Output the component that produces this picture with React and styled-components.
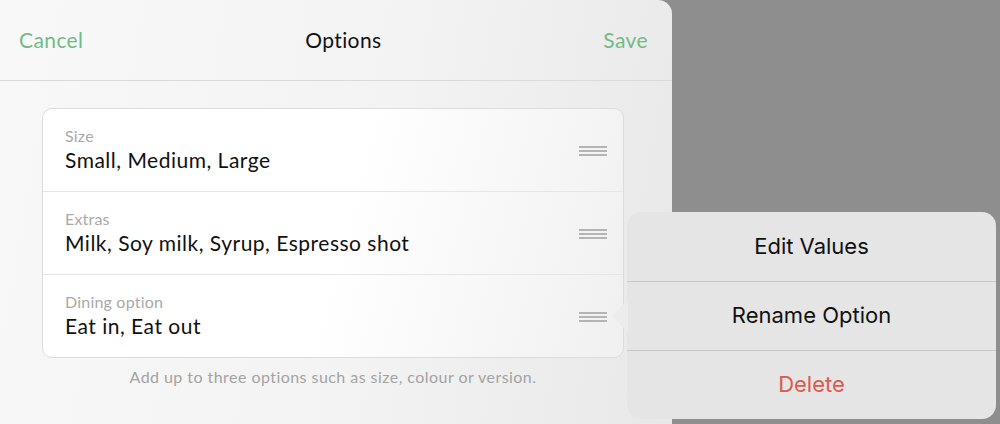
import React from "react";
import styled, { createGlobalStyle } from "styled-components";

const GlobalStyle = createGlobalStyle`
  html, body {
    margin: 0;
    padding: 0;
    height: 100%;
    overflow: hidden;
  }
  body {
    background: #8e8e8e;
    font-family: Lato, "Noto Sans", sans-serif;
  }
  #root {
    height: 100%;
  }
`;

const options = [
  { label: "Size", values: "Small, Medium, Large" },
  { label: "Extras", values: "Milk, Soy milk, Syrup, Espresso shot" },
  { label: "Dining option", values: "Eat in, Eat out" },
];

const menuItems = [
  { text: "Edit Values" },
  { text: "Rename Option" },
  { text: "Delete", danger: true },
];

const App = () => {
  return (
    <>
      <GlobalStyle />
      <Page>
        <Sheet>
          <Header>
            <NavButton>Cancel</NavButton>
            <Title>Options</Title>
            <NavButton>Save</NavButton>
          </Header>
          <Content>
            <Card>
              {options.map((opt) => (
                <Row key={opt.label}>
                  <RowText>
                    <Label>{opt.label}</Label>
                    <Value>{opt.values}</Value>
                  </RowText>
                  <Handle>
                    <span />
                    <span />
                    <span />
                  </Handle>
                </Row>
              ))}
            </Card>
            <Hint>Add up to three options such as size, colour or version.</Hint>
          </Content>
        </Sheet>

        <Popover>
          <Arrow />
          {menuItems.map((item) => (
            <MenuItem key={item.text} $danger={item.danger}>
              {item.text}
            </MenuItem>
          ))}
        </Popover>
      </Page>
    </>
  );
};

export default App;

const Page = styled.div`
  position: relative;
  display: flex;
  height: 100%;
  background: #8e8e8e;
`;

const Sheet = styled.div`
  width: 672px;
  height: 100%;
  background: linear-gradient(100deg, #f8f8f8 0%, #f3f3f3 55%, #e8e8e8 100%);
  border-top-right-radius: 14px;
  display: flex;
  flex-direction: column;
`;

const Header = styled.div`
  height: 80px;
  border-bottom: 1px solid #dadada;
  display: flex;
  align-items: center;
  justify-content: space-between;
  padding: 0 24px 0 19px;
`;

const NavButton = styled.span`
  color: #72bb86;
  font-size: 21px;
  letter-spacing: 0.4px;
  padding-bottom: 1px;
`;

const Title = styled.span`
  color: #111;
  font-size: 21px;
  letter-spacing: 0.4px;
  padding-bottom: 1px;
`;

const Content = styled.div`
  padding: 27px 48px 0 42px;
  display: flex;
  flex-direction: column;
`;

const Card = styled.div`
  border: 1px solid #dcdcdc;
  border-radius: 10px;
  background: linear-gradient(105deg, #ffffff 0%, #ffffff 50%, #f0f0f0 100%);
  overflow: hidden;
`;

const Row = styled.div`
  height: 82px;
  display: flex;
  align-items: center;
  justify-content: space-between;
  padding: 0 16px 0 22px;
  & + & {
    border-top: 1px solid #e6e6e6;
  }
`;

const RowText = styled.div`
  display: flex;
  flex-direction: column;
  padding-bottom: 2px;
`;

const Label = styled.span`
  color: #a9a9a9;
  font-size: 16px;
  letter-spacing: 0.2px;
  line-height: 20px;
`;

const Value = styled.span`
  color: #111;
  font-size: 21px;
  letter-spacing: 0.5px;
  line-height: 27px;
`;

const Handle = styled.div`
  width: 28px;
  display: flex;
  flex-direction: column;
  gap: 2px;
  padding-top: 2px;

  span {
    display: block;
    height: 2px;
    background: #b4b4b4;
  }
`;

const Hint = styled.div`
  text-align: center;
  color: #a3a3a3;
  font-size: 16px;
  letter-spacing: 0.45px;
  margin-top: 9px;
`;

const Popover = styled.div`
  position: absolute;
  left: 627px;
  top: 212px;
  width: 369px;
  background: #e5e5e5;
  border-radius: 14px;
  display: flex;
  flex-direction: column;
`;

const Arrow = styled.div`
  position: absolute;
  left: -15px;
  top: 88px;
  width: 0;
  height: 0;
  border-top: 16px solid transparent;
  border-bottom: 16px solid transparent;
  border-right: 16px solid #ececec;
`;

const MenuItem = styled.div`
  height: 69px;
  display: flex;
  align-items: center;
  justify-content: center;
  font-family: Inter, Roboto, sans-serif;
  font-size: 22px;
  padding-bottom: 2px;
  box-sizing: border-box;
  color: ${(p) => (p.$danger ? "#dc5a4c" : "#111")};
  & + & {
    border-top: 1px solid #c9c9c9;
  }
`;
